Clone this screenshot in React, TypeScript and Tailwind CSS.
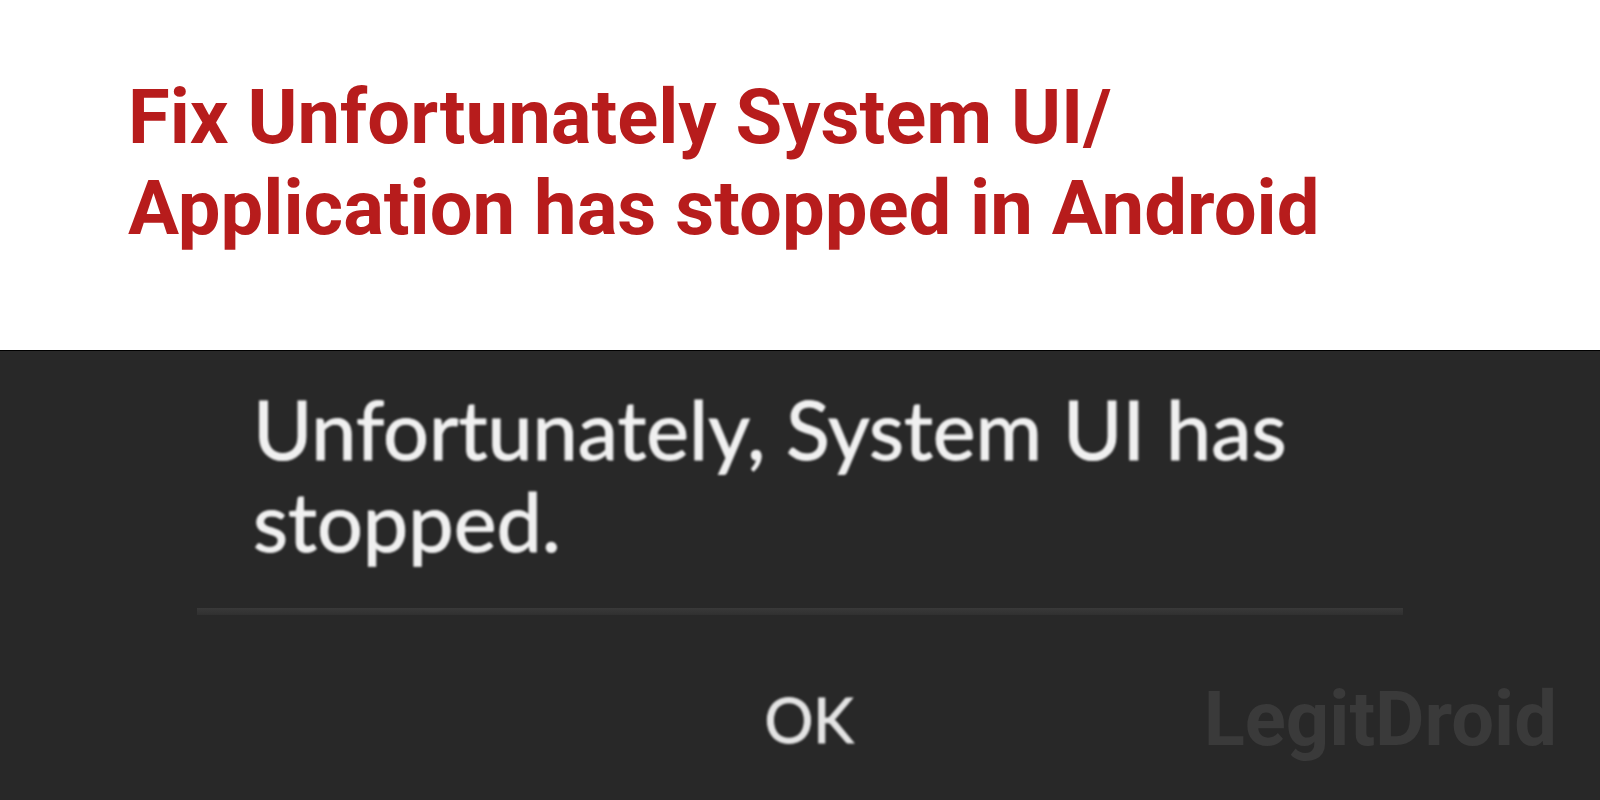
export default function App() {
  return (
    <main className="flex min-h-screen flex-col bg-white">
      <header className="border-b border-black px-32 pt-[72px] pb-24 font-['Roboto',sans-serif]">
        <h1 className="text-[76px] leading-[91px] font-bold text-[#b71c1c]">
          Fix Unfortunately System UI/
          <br />
          Application has stopped in Android
        </h1>
      </header>
      <section className="relative flex-1 bg-[#282828] px-[197px] pt-8 font-['Lato',sans-serif] text-[#f0f0f0]">
        <p className="px-14 pb-[41px] text-[81px] leading-[92px] blur-[1px] [-webkit-text-stroke:1px_#f0f0f0]">
          Unfortunately, System UI has
          <br />
          stopped.
        </p>
        <div className="h-[7px] bg-linear-to-b from-[#393939] to-[#303030]" />
        <div className="flex justify-center pt-[69px] pl-[18px]">
          <button className="px-6 text-[61px] leading-[72px] text-[#e4e4e4] blur-[1px] [-webkit-text-stroke:1px_#e4e4e4]">
            OK
          </button>
        </div>
        <span className="absolute right-[43px] bottom-[35px] font-['Roboto',sans-serif] text-[76px] leading-[92px] font-bold text-[#3a3a3a]">
          LegitDroid
        </span>
      </section>
    </main>
  );
}
